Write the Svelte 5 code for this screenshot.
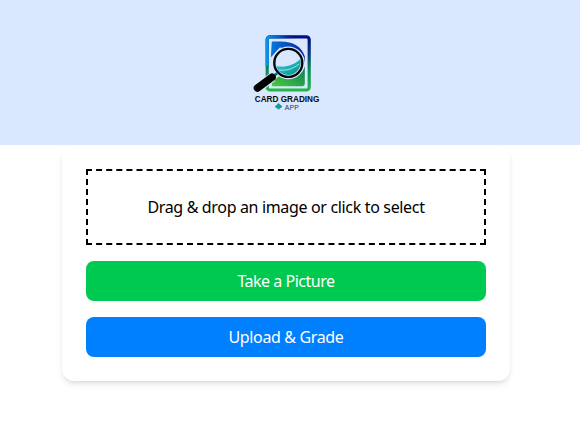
<script>
  const dropLabel = 'Drag & drop an image or click to select';
</script>

<div class="page">
  <header>
    <svg class="logo" viewBox="245 28 84 86" width="84" height="86" role="img" aria-label="Card Grading App">
      <defs>
        <linearGradient id="frame" x1="0" y1="0" x2="0" y2="1">
          <stop offset="0" stop-color="#040c86" />
          <stop offset=".35" stop-color="#06407c" />
          <stop offset=".6" stop-color="#0b8a5c" />
          <stop offset="1" stop-color="#22b845" />
        </linearGradient>
        <linearGradient id="sheen" x1="0" y1="0" x2="1" y2="0">
          <stop offset="0" stop-color="#0794e6" />
          <stop offset=".3" stop-color="#0570da" stop-opacity=".8" />
          <stop offset=".8" stop-color="#040c86" stop-opacity="0" />
        </linearGradient>
        <linearGradient id="top" x1="0" y1="0" x2="1" y2="0">
          <stop offset="0" stop-color="#0878dc" />
          <stop offset="1" stop-color="#0520a4" />
        </linearGradient>
        <linearGradient id="grass" x1="0" y1="1" x2="1" y2="0">
          <stop offset="0" stop-color="#4ccb3c" />
          <stop offset="1" stop-color="#087a58" />
        </linearGradient>
        <linearGradient id="lens" x1="0" y1="0" x2="1" y2="1">
          <stop offset="0" stop-color="#35d4ec" />
          <stop offset="1" stop-color="#078d80" />
        </linearGradient>
      </defs>
      <rect x="267.2" y="36.8" width="42" height="53.2" rx="2.8" fill="none" stroke="url(#frame)" stroke-width="3.2" />
      <path d="M267.2 66V39.6a2.8 2.8 0 0 1 2.8-2.8h36" fill="none" stroke="url(#sheen)" stroke-width="3.2" />
      <path d="M271.8 41.4h9c12 0 21 5 24 15v6l-9-12-16-3-9 10z" fill="url(#top)" />
      <path d="M271.8 86.2v-5l7-6c11 6 23 1 26-9v17q0 3-3 3z" fill="url(#grass)" />
      <circle cx="288.3" cy="62.9" r="16.4" fill="#d9e8fe" />
      <circle cx="288.3" cy="62.9" r="14" fill="#d9e8fe" stroke="#05080a" stroke-width="2.4" />
      <path d="M276.3 66c9 2 18-1 24-7 2 8-4 16-12 16-6 0-11-4-12-9z" fill="url(#lens)" />
      <path d="M279 70c7 1 14-1 20-6" fill="none" stroke="#a6f2ee" stroke-width=".9" />
      <path d="M277.5 73.5l-4 3.5" stroke="#d9e8fe" stroke-width="6" />
      <path d="M277.5 73l-4.5 3.5" stroke="#126684" stroke-width="2.6" />
      <path d="M272.3 77.2L257.5 88.3" stroke="#d9e8fe" stroke-width="9.5" />
      <path d="M272 77.3L257.5 88" stroke="#000" stroke-width="7.6" stroke-linecap="round" />
      <text x="254.8" y="101.7" textLength="64.6" lengthAdjust="spacingAndGlyphs" class="name">CARD GRADING</text>
      <path d="M278.6 103l1.8 1.8 2 1.7-1.7 1.8-1.2-.2.7 1.2h-3.2l.7-1.2-1.2.2-1.7-1.8 2-1.7z" fill="#159aa8" />
      <text x="284.7" y="109.5" textLength="14.2" class="app">APP</text>
    </svg>
  </header>
  <main>
    <section class="card">
      <div class="drop"><span>{dropLabel}</span></div>
      <button class="take">Take a Picture</button>
      <button class="upload">Upload &amp; Grade</button>
    </section>
  </main>
</div>

<style>
  :global(body) { margin: 0; background: #fff; }
  .page { min-height: 427px; font-family: "Segoe UI", "Noto Sans", "Open Sans", sans-serif; font-size: 16px; line-height: 24px; color: #000; }
  header { height: 145px; background: #d9e8fe; display: flex; justify-content: center; align-items: center; padding: 0 6px 3px 0; box-sizing: border-box; }
  .logo { display: block; }
  .name { font: 700 8.2px "Liberation Sans", sans-serif; fill: #080c10; }
  .app { font: 6.8px "Liberation Sans", sans-serif; fill: #30363d; }
  main { display: flex; justify-content: center; padding-right: 8px; overflow: hidden; padding-bottom: 30px; }
  .card { width: 448px; box-sizing: border-box; padding: 24px; border-radius: 12px; display: flex; flex-direction: column; gap: 16px; background: #fff; box-shadow: 0 4px 6px -1px rgba(0,0,0,.1), 0 2px 4px -2px rgba(0,0,0,.1); }
  .drop { border: 2px dashed #000; padding: 24px; text-align: center; white-space: nowrap; letter-spacing: -.34px; }
  button { height: 40px; border: 0; border-radius: 8px; padding: 0; color: #fff; font: inherit; }
  .take { background: #00c951; letter-spacing: -.48px; }
  .upload { background: #0080ff; letter-spacing: -.35px; }
</style>
